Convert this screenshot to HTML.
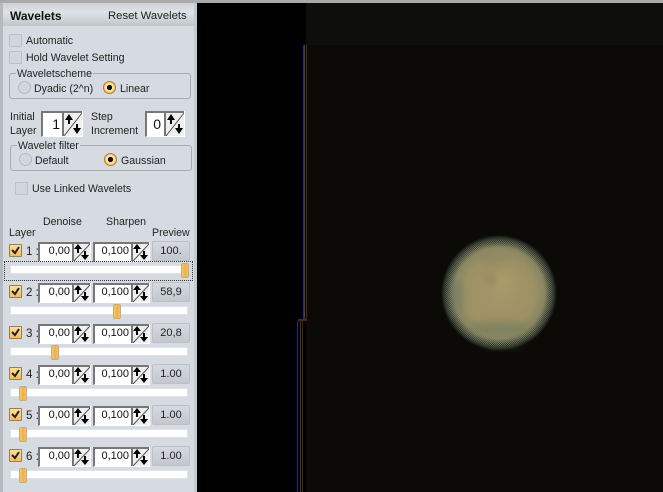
<!DOCTYPE html>
<html><head><meta charset="utf-8"><style>
html,body{margin:0;padding:0;width:663px;height:492px;overflow:hidden;background:#0b0a07}
*{box-sizing:border-box}
body{font-family:"Liberation Sans",sans-serif;font-size:10.6px;color:#222;position:relative}
.a,.t,.cb,.rd,.gb,.ed,.sp,.pv,.tr,.th,.ck{position:absolute}
.t{white-space:nowrap;line-height:12px}
#panel{left:0;top:0;width:197px;height:492px;background:#d6dbe1;border-right:1px solid #aab0b6}
#top{left:0;top:0;width:663px;height:3px;background:#a9a9a9;z-index:3}
#hd{left:3px;top:3px;width:191px;height:23px;background:linear-gradient(#ccd0d5,#dfe2e6 40%,#c2c6cb);}
#ledge{left:0;top:3px;width:3px;height:489px;background:#b5bac0}
#redge{left:194px;top:3px;width:3px;height:489px;background:#c4c9cf}
.cb{width:13px;height:13px;border:1px solid #bcc1c7;background:#d2d7dd;border-radius:1px}
.rd{width:13px;height:13px;border-radius:50%;border:1px solid #b5bac0;background:#d2d7dd}
.rd.on{border:1px solid #b87a20;background:radial-gradient(circle,#111 0 2.4px,#ffe2a8 2.8px 4px,#f0b050 6px)}
.gb{border:1px solid #a6acb3;border-radius:3px}
.lg{position:absolute;background:#d6dbe1;padding:0 1px;white-space:nowrap;line-height:12px;font-size:10.6px}
.ed{background:#fff;border:1px solid #777;border-width:2px 0 1px 2px;border-bottom-color:#fff;text-align:right;font-size:11px;color:#111;line-height:14px;padding-right:2px;height:20px}
.big{font-size:14px;line-height:22px;height:26px;padding-right:3px}
.sp{width:19px;height:20px;overflow:hidden;border-right:1px solid #fff;border-bottom:1px solid #fff}
.sp svg{display:block}
.pv{width:38px;height:20px;left:152px;background:linear-gradient(#d6dae0,#c4c8ce);border:1px solid #bcc1c6;border-radius:2px;text-align:center;line-height:19px;font-size:11px;color:#222}
.ck{left:9px;width:13px;height:13px;background:linear-gradient(#ffe09a,#f4bd5e);border:1px solid #9a8050;border-radius:1px}
.ck svg{display:block}
.tr{left:10px;width:178px;height:9px;background:#fff;border:1px solid #dfe3e7;border-radius:1px}
.th{width:8px;height:15px;background:linear-gradient(90deg,#f0c878,#f6b040 50%,#e8c078);border:1px solid #c4ae80;border-radius:2px}
.n{font-size:11.5px}
</style></head><body>
<div class="a" id="top"></div>
<div class="a" style="left:197px;top:3px;width:466px;height:489px;background:#0b0a07"></div>
<div class="a" style="left:306px;top:3px;width:357px;height:42px;background:#0e0e0d"></div>
<div class="a" style="left:197px;top:3px;width:109px;height:489px;background:#000"></div>
<div class="a" style="left:197px;top:319px;width:100px;height:173px;background:#000"></div>
<div class="a" style="left:303px;top:45px;width:1px;height:274px;background:#1c2a9a"></div>
<div class="a" style="left:304px;top:45px;width:1px;height:274px;background:#3a4a30"></div>
<div class="a" style="left:306px;top:45px;width:1px;height:274px;background:#5a2416"></div>
<div class="a" style="left:297px;top:321px;width:1px;height:171px;background:#1c2a9a"></div>
<div class="a" style="left:300px;top:321px;width:1px;height:171px;background:#2c4028"></div>
<div class="a" style="left:302px;top:321px;width:1px;height:171px;background:#4a2014"></div>
<div class="a" style="left:298px;top:319px;width:9px;height:2px;background:#5a2416"></div>

<svg class="a" style="left:430px;top:225px" width="140" height="140" viewBox="0 0 140 140">
<defs>
<radialGradient id="p" cx="0.5" cy="0.5" r="0.5"><stop offset="0" stop-color="#a4976a"/><stop offset=".6" stop-color="#9e9264"/><stop offset=".8" stop-color="#888662"/><stop offset=".9" stop-color="#5d6452"/><stop offset=".97" stop-color="#20241c"/><stop offset="1" stop-color="#0b0a07"/></radialGradient>
<radialGradient id="rg" cx="0.5" cy="0.5" r="0.5"><stop offset=".78" stop-color="#fff" stop-opacity="0"/><stop offset=".9" stop-color="#fff" stop-opacity=".5"/><stop offset="1" stop-color="#fff" stop-opacity="0"/></radialGradient>
<pattern id="ch" width="2" height="2" patternUnits="userSpaceOnUse"><rect width="1" height="1" fill="#0b0a07"/><rect x="1" y="1" width="1" height="1" fill="#0b0a07"/></pattern>
<mask id="m"><circle cx="69" cy="68" r="58" fill="url(#rg)"/></mask>
<filter id="b2" x="-100%" y="-100%" width="300%" height="300%"><feGaussianBlur stdDeviation="4"/></filter>
<filter id="b3" x="-100%" y="-100%" width="300%" height="300%"><feGaussianBlur stdDeviation="6"/></filter>
</defs>
<circle cx="69" cy="68" r="58" fill="url(#p)"/>
<ellipse cx="70" cy="104" rx="34" ry="7" fill="#7f8260" filter="url(#b2)"/>
<ellipse cx="27" cy="72" rx="6" ry="18" fill="#7d8064" filter="url(#b2)"/>
<ellipse cx="65" cy="32" rx="24" ry="6" fill="#8e8860" filter="url(#b3)"/>
<ellipse cx="62" cy="54" rx="4" ry="6" fill="#8b8260" filter="url(#b2)"/>
<ellipse cx="74" cy="56" rx="8" ry="10" fill="#ad9e66" filter="url(#b3)"/>
<ellipse cx="20" cy="68" rx="2" ry="18" fill="#3c5f60" filter="url(#b2)" opacity=".35"/>
<ellipse cx="65" cy="17" rx="16" ry="2" fill="#2e6a48" filter="url(#b2)" opacity=".3"/>
<ellipse cx="72" cy="121" rx="20" ry="2" fill="#5c7a4c" filter="url(#b2)" opacity=".3"/>
<circle cx="69" cy="68" r="58" fill="url(#ch)" mask="url(#m)"/>
</svg>

<div class="a" id="panel"></div>
<div class="a" id="ledge"></div>
<div class="a" id="redge"></div>
<div class="a" id="hd"></div>
<div class="t" style="left:10px;top:10px;font-weight:bold;font-size:12px;color:#111">Wavelets</div>
<div class="t" style="left:108px;top:10px;font-size:11.3px;color:#222">Reset Wavelets</div>

<div class="cb" style="left:9px;top:34px"></div><div class="t" style="left:26px;top:35px">Automatic</div>
<div class="cb" style="left:9px;top:51px"></div><div class="t" style="left:26px;top:52px">Hold Wavelet Setting</div>

<div class="a gb" style="left:9px;top:73px;width:182px;height:26px"></div>
<div class="lg" style="left:16px;top:68px">Waveletscheme</div>
<div class="rd" style="left:18px;top:81px"></div><div class="t" style="left:34px;top:83px">Dyadic (2^n)</div>
<div class="rd on" style="left:103px;top:81px"></div><div class="t" style="left:120px;top:83px">Linear</div>

<div class="t" style="left:10px;top:111px">Initial</div><div class="t" style="left:10px;top:125px">Layer</div>
<div class="ed big" style="left:41px;top:111px;width:22px">1</div>
<div class="sp" style="left:62px;top:111px;width:21px;height:26px"><svg width="21" height="26"><rect width="21" height="26" fill="#efefef"/><path d="M0 1H21M1 0V26" stroke="#777" stroke-width="2" fill="none"/><path d="M2 25L20 2" stroke="#555" fill="none"/><path d="M7 3L3 9H6V13H8V9H11Z M15 23L11 17H14V13H16V17H19Z" fill="#000"/></svg></div>
<div class="t" style="left:91px;top:111px">Step</div><div class="t" style="left:91px;top:125px">Increment</div>
<div class="ed big" style="left:145px;top:111px;width:19px">0</div>
<div class="sp" style="left:164px;top:111px;width:21px;height:26px"><svg width="21" height="26"><rect width="21" height="26" fill="#efefef"/><path d="M0 1H21M1 0V26" stroke="#777" stroke-width="2" fill="none"/><path d="M2 25L20 2" stroke="#555" fill="none"/><path d="M7 3L3 9H6V13H8V9H11Z M15 23L11 17H14V13H16V17H19Z" fill="#000"/></svg></div>

<div class="a gb" style="left:10px;top:145px;width:182px;height:26px"></div>
<div class="lg" style="left:17px;top:140px">Wavelet filter</div>
<div class="rd" style="left:19px;top:153px"></div><div class="t" style="left:35px;top:155px">Default</div>
<div class="rd on" style="left:104px;top:153px"></div><div class="t" style="left:121px;top:155px">Gaussian</div>

<div class="cb" style="left:15px;top:182px"></div><div class="t" style="left:32px;top:183px">Use Linked Wavelets</div>

<div class="t" style="left:43px;top:216px">Denoise</div>
<div class="t" style="left:106px;top:216px">Sharpen</div>
<div class="t" style="left:9px;top:227px">Layer</div>
<div class="t" style="left:152px;top:227px">Preview</div>

<div class="ck" style="top:244px"><svg width="11" height="11"><path d="M2 5L5 8L9 2" stroke="#222" stroke-width="2" fill="none"/></svg></div>
<div class="t n" style="left:26px;top:246px">1 :</div>
<div class="ed" style="left:38px;top:242px;width:34px">0,00</div>
<div class="sp" style="left:72px;top:242px"><svg width="19" height="20"><rect width="19" height="20" fill="#efefef"/><path d="M0 1H19M1 0V20" stroke="#777" stroke-width="2" fill="none"/><path d="M2 19L18 2" stroke="#555" fill="none"/><path d="M6 2L2 7H5V11H7V7H10Z M13 18L9 13H12V9H14V13H17Z" fill="#000"/></svg></div>
<div class="ed" style="left:93px;top:242px;width:38px">0,100</div>
<div class="sp" style="left:131px;top:242px"><svg width="19" height="20"><rect width="19" height="20" fill="#efefef"/><path d="M0 1H19M1 0V20" stroke="#777" stroke-width="2" fill="none"/><path d="M2 19L18 2" stroke="#555" fill="none"/><path d="M6 2L2 7H5V11H7V7H10Z M13 18L9 13H12V9H14V13H17Z" fill="#000"/></svg></div>
<div class="pv" style="top:241px">100.</div>
<div class="a" style="left:4px;top:261px;width:189px;height:20px;border:1px dotted #333"></div>
<div class="tr" style="top:265px"></div><div class="th" style="left:181px;top:263px"></div>

<div class="ck" style="top:285px"><svg width="11" height="11"><path d="M2 5L5 8L9 2" stroke="#222" stroke-width="2" fill="none"/></svg></div>
<div class="t n" style="left:26px;top:287px">2 :</div>
<div class="ed" style="left:38px;top:283px;width:34px">0,00</div>
<div class="sp" style="left:72px;top:283px"><svg width="19" height="20"><rect width="19" height="20" fill="#efefef"/><path d="M0 1H19M1 0V20" stroke="#777" stroke-width="2" fill="none"/><path d="M2 19L18 2" stroke="#555" fill="none"/><path d="M6 2L2 7H5V11H7V7H10Z M13 18L9 13H12V9H14V13H17Z" fill="#000"/></svg></div>
<div class="ed" style="left:93px;top:283px;width:38px">0,100</div>
<div class="sp" style="left:131px;top:283px"><svg width="19" height="20"><rect width="19" height="20" fill="#efefef"/><path d="M0 1H19M1 0V20" stroke="#777" stroke-width="2" fill="none"/><path d="M2 19L18 2" stroke="#555" fill="none"/><path d="M6 2L2 7H5V11H7V7H10Z M13 18L9 13H12V9H14V13H17Z" fill="#000"/></svg></div>
<div class="pv" style="top:282px">58,9</div>
<div class="tr" style="top:306px"></div><div class="th" style="left:113px;top:304px"></div>

<div class="ck" style="top:326px"><svg width="11" height="11"><path d="M2 5L5 8L9 2" stroke="#222" stroke-width="2" fill="none"/></svg></div>
<div class="t n" style="left:26px;top:328px">3 :</div>
<div class="ed" style="left:38px;top:324px;width:34px">0,00</div>
<div class="sp" style="left:72px;top:324px"><svg width="19" height="20"><rect width="19" height="20" fill="#efefef"/><path d="M0 1H19M1 0V20" stroke="#777" stroke-width="2" fill="none"/><path d="M2 19L18 2" stroke="#555" fill="none"/><path d="M6 2L2 7H5V11H7V7H10Z M13 18L9 13H12V9H14V13H17Z" fill="#000"/></svg></div>
<div class="ed" style="left:93px;top:324px;width:38px">0,100</div>
<div class="sp" style="left:131px;top:324px"><svg width="19" height="20"><rect width="19" height="20" fill="#efefef"/><path d="M0 1H19M1 0V20" stroke="#777" stroke-width="2" fill="none"/><path d="M2 19L18 2" stroke="#555" fill="none"/><path d="M6 2L2 7H5V11H7V7H10Z M13 18L9 13H12V9H14V13H17Z" fill="#000"/></svg></div>
<div class="pv" style="top:323px">20,8</div>
<div class="tr" style="top:347px"></div><div class="th" style="left:51px;top:345px"></div>

<div class="ck" style="top:367px"><svg width="11" height="11"><path d="M2 5L5 8L9 2" stroke="#222" stroke-width="2" fill="none"/></svg></div>
<div class="t n" style="left:26px;top:369px">4 :</div>
<div class="ed" style="left:38px;top:365px;width:34px">0,00</div>
<div class="sp" style="left:72px;top:365px"><svg width="19" height="20"><rect width="19" height="20" fill="#efefef"/><path d="M0 1H19M1 0V20" stroke="#777" stroke-width="2" fill="none"/><path d="M2 19L18 2" stroke="#555" fill="none"/><path d="M6 2L2 7H5V11H7V7H10Z M13 18L9 13H12V9H14V13H17Z" fill="#000"/></svg></div>
<div class="ed" style="left:93px;top:365px;width:38px">0,100</div>
<div class="sp" style="left:131px;top:365px"><svg width="19" height="20"><rect width="19" height="20" fill="#efefef"/><path d="M0 1H19M1 0V20" stroke="#777" stroke-width="2" fill="none"/><path d="M2 19L18 2" stroke="#555" fill="none"/><path d="M6 2L2 7H5V11H7V7H10Z M13 18L9 13H12V9H14V13H17Z" fill="#000"/></svg></div>
<div class="pv" style="top:364px">1.00</div>
<div class="tr" style="top:388px"></div><div class="th" style="left:19px;top:386px"></div>

<div class="ck" style="top:408px"><svg width="11" height="11"><path d="M2 5L5 8L9 2" stroke="#222" stroke-width="2" fill="none"/></svg></div>
<div class="t n" style="left:26px;top:410px">5 :</div>
<div class="ed" style="left:38px;top:406px;width:34px">0,00</div>
<div class="sp" style="left:72px;top:406px"><svg width="19" height="20"><rect width="19" height="20" fill="#efefef"/><path d="M0 1H19M1 0V20" stroke="#777" stroke-width="2" fill="none"/><path d="M2 19L18 2" stroke="#555" fill="none"/><path d="M6 2L2 7H5V11H7V7H10Z M13 18L9 13H12V9H14V13H17Z" fill="#000"/></svg></div>
<div class="ed" style="left:93px;top:406px;width:38px">0,100</div>
<div class="sp" style="left:131px;top:406px"><svg width="19" height="20"><rect width="19" height="20" fill="#efefef"/><path d="M0 1H19M1 0V20" stroke="#777" stroke-width="2" fill="none"/><path d="M2 19L18 2" stroke="#555" fill="none"/><path d="M6 2L2 7H5V11H7V7H10Z M13 18L9 13H12V9H14V13H17Z" fill="#000"/></svg></div>
<div class="pv" style="top:405px">1.00</div>
<div class="tr" style="top:429px"></div><div class="th" style="left:19px;top:427px"></div>

<div class="ck" style="top:449px"><svg width="11" height="11"><path d="M2 5L5 8L9 2" stroke="#222" stroke-width="2" fill="none"/></svg></div>
<div class="t n" style="left:26px;top:451px">6 :</div>
<div class="ed" style="left:38px;top:447px;width:34px">0,00</div>
<div class="sp" style="left:72px;top:447px"><svg width="19" height="20"><rect width="19" height="20" fill="#efefef"/><path d="M0 1H19M1 0V20" stroke="#777" stroke-width="2" fill="none"/><path d="M2 19L18 2" stroke="#555" fill="none"/><path d="M6 2L2 7H5V11H7V7H10Z M13 18L9 13H12V9H14V13H17Z" fill="#000"/></svg></div>
<div class="ed" style="left:93px;top:447px;width:38px">0,100</div>
<div class="sp" style="left:131px;top:447px"><svg width="19" height="20"><rect width="19" height="20" fill="#efefef"/><path d="M0 1H19M1 0V20" stroke="#777" stroke-width="2" fill="none"/><path d="M2 19L18 2" stroke="#555" fill="none"/><path d="M6 2L2 7H5V11H7V7H10Z M13 18L9 13H12V9H14V13H17Z" fill="#000"/></svg></div>
<div class="pv" style="top:446px">1.00</div>
<div class="tr" style="top:470px"></div><div class="th" style="left:19px;top:468px"></div>
</body></html>
